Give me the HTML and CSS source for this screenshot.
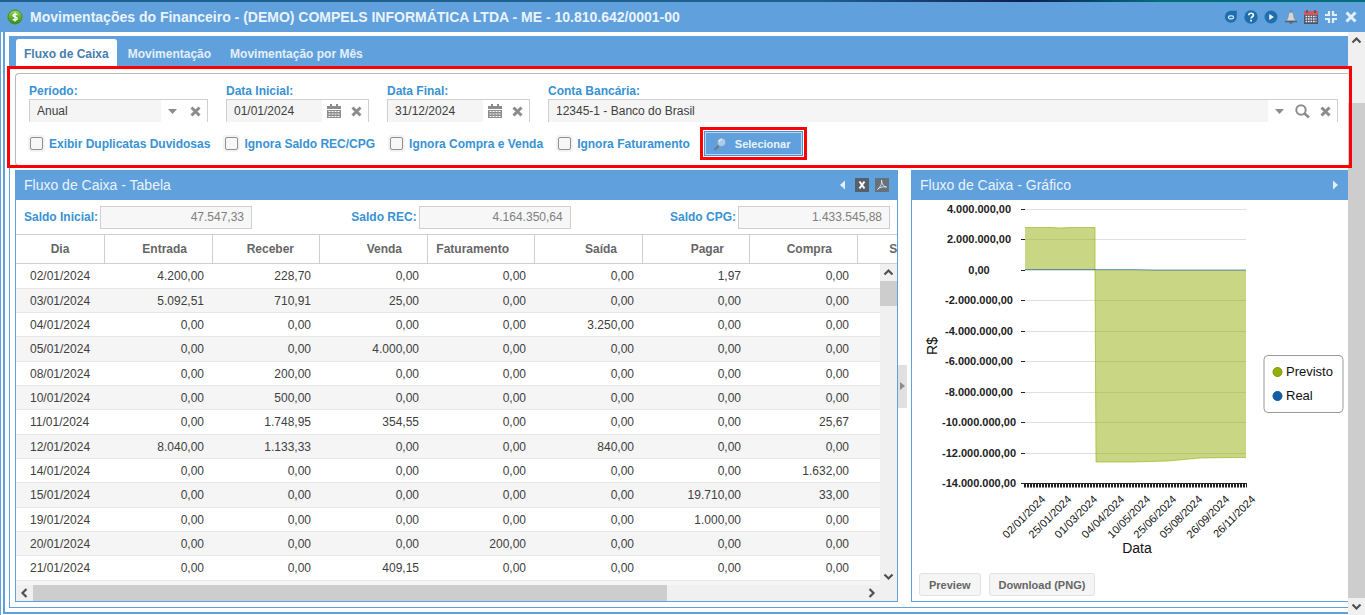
FILE: index.html
```
<!DOCTYPE html>
<html lang="pt-BR">
<head>
    <meta charset="UTF-8">
    <meta name="viewport" content="width=device-width, initial-scale=1.0">
    <title>Movimentações do Financeiro</title>
    <link rel="stylesheet" href="styles.css">
</head>
<body>
    <div class="window">
        <header class="titlebar">
            <svg class="title-icon" width="16" height="16" viewBox="0 0 16 16" aria-hidden="true">
                <defs>
                    <linearGradient id="coin" x1="0" y1="0" x2="0" y2="1">
                        <stop offset="0" stop-color="#9bd65a"/>
                        <stop offset="1" stop-color="#2f8a12"/>
                    </linearGradient>
                </defs>
                <circle cx="8" cy="8" r="7" fill="url(#coin)" stroke="#3f8f22"/>
                <path d="M10.3 5.7C9.6 4.9 6 4.7 6 6.5c0 1.7 4.3 1 4.3 3 0 1.9-3.600 1.700-4.600.7M8 3.500v9" fill="none" stroke="#fff" stroke-width="1.400"/>
            </svg>
            <h1>Movimentações do Financeiro - (DEMO) COMPELS INFORMÁTICA LTDA - ME - 10.810.642/0001-00</h1>
            <div class="title-tools">
                <button type="button" aria-label="Reiniciar">
                    <svg width="14" height="14" viewBox="0 0 14 14"><path d="M7 .8h5.800v5.800A6 6 0 1 1 7 .8z" fill="#1f6fae"/><rect x="4.500" y="5.800" width="5" height="3" rx="1.500" fill="none" stroke="#e4effa" stroke-width="1.200"/></svg>
                </button>
                <button type="button" aria-label="Ajuda">
                    <svg width="14" height="14" viewBox="0 0 14 14"><circle cx="7" cy="7" r="6.700" fill="#1f6fae"/><path d="M4.800 5.300C4.800 2.500 9.400 2.600 9.400 5.200 9.400 6.700 7.100 6.900 7.100 8.600M7.100 9.800v1.700" fill="none" stroke="#fff" stroke-width="1.700"/></svg>
                </button>
                <button type="button" aria-label="Executar">
                    <svg width="14" height="14" viewBox="0 0 14 14"><circle cx="7" cy="7" r="6.500" fill="#1f6fae"/><path d="M5.300 4l4.500 3-4.500 3z" fill="#fff"/></svg>
                </button>
                <button type="button" aria-label="Avisos">
                    <svg width="14" height="14" viewBox="0 0 14 14"><path d="M6.200.5h1.600v2H6.200z" fill="#69747e"/><path d="M7 2C3.800 2 4.600 7 3.400 9L1.500 11h11L10.600 9C9.400 7 10.200 2 7 2z" fill="#cfd6dc" stroke="#7f8a94" stroke-width=".8"/><path d="M1 10.800h12v1.400H1zM5.500 12.200h3v1.300h-3z" fill="#56616b"/></svg>
                </button>
                <button type="button" aria-label="Calendário">
                    <svg width="14" height="14" viewBox="0 0 14 14"><path d="M0 1h14v13H0z" fill="#4f5368"/><path d="M0 1h14v4H0z" fill="#d8565a"/><path d="M2 0h2v3H2zM10 0h2v3h-2z" fill="#5f5a68"/><path d="M1.500 6.500h11M1.500 9h11M1.500 11.500h11" stroke="#e8ecf2" stroke-width="1.500" stroke-dasharray="1.700 .8"/></svg>
                </button>
                <button type="button" aria-label="Restaurar">
                    <svg width="14" height="14" viewBox="0 0 14 14"><path d="M5 1v4H1M9 1v4h4M5 13V9H1M9 13V9h4" fill="none" stroke="#e4effa" stroke-width="2.200"/></svg>
                </button>
                <button type="button" aria-label="Fechar">
                    <svg width="14" height="14" viewBox="0 0 14 14"><path d="M2.500 2.500l9 9M11.500 2.500l-9 9" stroke="#e4effa" stroke-width="3"/></svg>
                </button>
            </div>
        </header>

        <div class="window-body">
            <main class="frame">
                <div class="tab-panel">
                    <nav class="tabs">
                        <button type="button" class="tab active">Fluxo de Caixa</button>
                        <button type="button" class="tab">Movimentação</button>
                        <button type="button" class="tab">Movimentação por Mês</button>
                    </nav>

                    <form class="filters">
                        <div class="filter-row">
                            <div class="field field-period">
                                <label for="periodo">Período:</label>
                                <div class="control">
                                    <select id="periodo"><option>Anual</option></select>
                                    <span class="trigger"><svg width="9" height="5" viewBox="0 0 9 5"><path d="M0 0h9L4.500 5z" fill="#8c8c8c"/></svg></span>
                                    <button type="button" class="trigger" aria-label="Limpar período"><svg width="11" height="11" viewBox="0 0 11 11"><path d="M1.500 1.500l8 8M9.500 1.500l-8 8" stroke="#8c8c8c" stroke-width="3"/></svg></button>
                                </div>
                            </div>
                            <div class="field field-date">
                                <label for="data-inicial">Data Inicial:</label>
                                <div class="control">
                                    <input type="text" id="data-inicial" value="01/01/2024">
                                    <button type="button" class="trigger" aria-label="Abrir calendário"><svg width="14" height="14" viewBox="0 0 14 14"><path d="M3 0h2v2h4V0h2v2h3v3H0V2h3zM0 6h14v8H0z" fill="#8c8c8c"/><path d="M1.500 7.500h11M1.500 10h11M1.500 12.500h11" stroke="#fff" stroke-width="1" stroke-dasharray="2 1"/></svg></button>
                                    <button type="button" class="trigger" aria-label="Limpar data inicial"><svg width="11" height="11" viewBox="0 0 11 11"><path d="M1.500 1.500l8 8M9.500 1.500l-8 8" stroke="#8c8c8c" stroke-width="3"/></svg></button>
                                </div>
                            </div>
                            <div class="field field-date">
                                <label for="data-final">Data Final:</label>
                                <div class="control">
                                    <input type="text" id="data-final" value="31/12/2024">
                                    <button type="button" class="trigger" aria-label="Abrir calendário"><svg width="14" height="14" viewBox="0 0 14 14"><path d="M3 0h2v2h4V0h2v2h3v3H0V2h3zM0 6h14v8H0z" fill="#8c8c8c"/><path d="M1.500 7.500h11M1.500 10h11M1.500 12.500h11" stroke="#fff" stroke-width="1" stroke-dasharray="2 1"/></svg></button>
                                    <button type="button" class="trigger" aria-label="Limpar data final"><svg width="11" height="11" viewBox="0 0 11 11"><path d="M1.500 1.500l8 8M9.500 1.500l-8 8" stroke="#8c8c8c" stroke-width="3"/></svg></button>
                                </div>
                            </div>
                            <div class="field field-account">
                                <label for="conta">Conta Bancária:</label>
                                <div class="control">
                                    <select id="conta"><option>12345-1 - Banco do Brasil</option></select>
                                    <span class="trigger"><svg width="9" height="5" viewBox="0 0 9 5"><path d="M0 0h9L4.500 5z" fill="#8c8c8c"/></svg></span>
                                    <button type="button" class="trigger" aria-label="Pesquisar conta"><svg width="15" height="15" viewBox="0 0 15 15"><circle cx="6" cy="6" r="4.700" fill="none" stroke="#8c8c8c" stroke-width="2"/><path d="M9.500 9.500l4.500 4" stroke="#8c8c8c" stroke-width="2.600"/></svg></button>
                                    <button type="button" class="trigger" aria-label="Limpar conta"><svg width="11" height="11" viewBox="0 0 11 11"><path d="M1.500 1.500l8 8M9.500 1.500l-8 8" stroke="#8c8c8c" stroke-width="3"/></svg></button>
                                </div>
                            </div>
                        </div>
                        <div class="check-row">
                            <label class="check"><input type="checkbox">Exibir Duplicatas Duvidosas</label>
                            <label class="check"><input type="checkbox">Ignora Saldo REC/CPG</label>
                            <label class="check"><input type="checkbox">Ignora Compra e Venda</label>
                            <label class="check"><input type="checkbox">Ignora Faturamento</label>
                            <button type="button" class="btn-select">
                                <svg width="14" height="14" viewBox="0 0 14 14" aria-hidden="true"><path d="M6 8.500L1.500 13" stroke="#6f7780" stroke-width="2.200"/><circle cx="8.500" cy="5.200" r="4.300" fill="#a9cdf0" stroke="#7d9dbd"/><path d="M6 5a2.800 2.800 0 0 1 3-2.500" fill="none" stroke="#e8f3fd"/></svg>
                                Selecionar
                            </button>
                        </div>
                    </form>

                    <div class="panels">
                        <section class="panel panel-table">
                            <div class="panel-header">
                                <h2>Fluxo de Caixa - Tabela</h2>
                                <button type="button" class="tool" aria-label="Recolher"><svg width="14" height="14" viewBox="0 0 14 14"><path d="M10 2.500v9L5 7z" fill="#e4effa"/></svg></button>
                                <button type="button" class="tool" aria-label="Exportar Excel"><svg width="14" height="14" viewBox="0 0 14 14"><path d="M0 0h14v14H0z" fill="#56606b"/><path d="M4.500 3.500l5 7M9.500 3.500l-5 7" stroke="#fff" stroke-width="2"/></svg></button>
                                <button type="button" class="tool" aria-label="Exportar PDF"><svg width="14" height="14" viewBox="0 0 14 14"><path d="M0 0h14v14H0z" fill="#66717c"/><path d="M6.500 2c.5 3 0 5.500-4 9.500 2-2.500 5-3 9-2.500-3-.5-5-3-5-7z" fill="none" stroke="#dfe6ec"/></svg></button>
                            </div>
                            <div class="balances">
                                <div class="balance"><label for="saldo-inicial">Saldo Inicial:</label><input type="text" id="saldo-inicial" value="47.547,33" readonly></div>
                                <div class="balance"><label for="saldo-rec">Saldo REC:</label><input type="text" id="saldo-rec" value="4.164.350,64" readonly></div>
                                <div class="balance"><label for="saldo-cpg">Saldo CPG:</label><input type="text" id="saldo-cpg" value="1.433.545,88" readonly></div>
                            </div>
                            <div class="grid">
                                <table>
                                    <thead>
                                        <tr><th>Dia</th><th>Entrada</th><th>Receber</th><th>Venda</th><th>Faturamento</th><th>Saída</th><th>Pagar</th><th>Compra</th><th>Saldo Dia</th></tr>
                                    </thead>
                                    <tbody>
                                        <tr><td>02/01/2024</td><td>4.200,00</td><td>228,70</td><td>0,00</td><td>0,00</td><td>0,00</td><td>1,97</td><td>0,00</td><td></td></tr>
                                        <tr><td>03/01/2024</td><td>5.092,51</td><td>710,91</td><td>25,00</td><td>0,00</td><td>0,00</td><td>0,00</td><td>0,00</td><td></td></tr>
                                        <tr><td>04/01/2024</td><td>0,00</td><td>0,00</td><td>0,00</td><td>0,00</td><td>3.250,00</td><td>0,00</td><td>0,00</td><td></td></tr>
                                        <tr><td>05/01/2024</td><td>0,00</td><td>0,00</td><td>4.000,00</td><td>0,00</td><td>0,00</td><td>0,00</td><td>0,00</td><td></td></tr>
                                        <tr><td>08/01/2024</td><td>0,00</td><td>200,00</td><td>0,00</td><td>0,00</td><td>0,00</td><td>0,00</td><td>0,00</td><td></td></tr>
                                        <tr><td>10/01/2024</td><td>0,00</td><td>500,00</td><td>0,00</td><td>0,00</td><td>0,00</td><td>0,00</td><td>0,00</td><td></td></tr>
                                        <tr><td>11/01/2024</td><td>0,00</td><td>1.748,95</td><td>354,55</td><td>0,00</td><td>0,00</td><td>0,00</td><td>25,67</td><td></td></tr>
                                        <tr><td>12/01/2024</td><td>8.040,00</td><td>1.133,33</td><td>0,00</td><td>0,00</td><td>840,00</td><td>0,00</td><td>0,00</td><td></td></tr>
                                        <tr><td>14/01/2024</td><td>0,00</td><td>0,00</td><td>0,00</td><td>0,00</td><td>0,00</td><td>0,00</td><td>1.632,00</td><td></td></tr>
                                        <tr><td>15/01/2024</td><td>0,00</td><td>0,00</td><td>0,00</td><td>0,00</td><td>0,00</td><td>19.710,00</td><td>33,00</td><td></td></tr>
                                        <tr><td>19/01/2024</td><td>0,00</td><td>0,00</td><td>0,00</td><td>0,00</td><td>0,00</td><td>1.000,00</td><td>0,00</td><td></td></tr>
                                        <tr><td>20/01/2024</td><td>0,00</td><td>0,00</td><td>0,00</td><td>200,00</td><td>0,00</td><td>0,00</td><td>0,00</td><td></td></tr>
                                        <tr><td>21/01/2024</td><td>0,00</td><td>0,00</td><td>409,15</td><td>0,00</td><td>0,00</td><td>0,00</td><td>0,00</td><td></td></tr>
                                        <tr><td></td><td></td><td></td><td></td><td></td><td></td><td></td><td></td><td></td></tr>
                                    </tbody>
                                </table>
                                <div class="scroll-v grid-scroll">
                                    <svg class="arrow" width="17" height="17" viewBox="0 0 17 17"><path d="M4.500 10.500l4-4 4 4" fill="none" stroke="#505050" stroke-width="2.200"/></svg>
                                    <div class="thumb"></div>
                                    <svg class="arrow arrow-end" width="17" height="17" viewBox="0 0 17 17"><path d="M4.500 6.500l4 4 4-4" fill="none" stroke="#505050" stroke-width="2.200"/></svg>
                                </div>
                            </div>
                            <div class="scroll-h">
                                <svg class="arrow" width="17" height="16" viewBox="0 0 17 16"><path d="M10.500 4l-4 4 4 4" fill="none" stroke="#505050" stroke-width="2.200"/></svg>
                                <div class="thumb"></div>
                                <svg class="arrow arrow-end" width="17" height="16" viewBox="0 0 17 16"><path d="M6.500 4l4 4-4 4" fill="none" stroke="#505050" stroke-width="2.200"/></svg>
                            </div>
                        </section>

                        <div class="splitter">
                            <button type="button" aria-label="Recolher gráfico"><svg width="5" height="8" viewBox="0 0 5 8"><path d="M0 0l5 4-5 4z" fill="#8c8c8c"/></svg></button>
                        </div>

                        <section class="panel panel-chart">
                            <div class="panel-header">
                                <h2>Fluxo de Caixa - Gráfico</h2>
                                <button type="button" class="tool" aria-label="Recolher"><svg width="14" height="14" viewBox="0 0 14 14"><path d="M5 2.500v9L10 7z" fill="#e4effa"/></svg></button>
                            </div>
                            <svg class="chart" width="436" height="366" viewBox="0 0 436 366" role="img" aria-label="Gráfico do fluxo de caixa">
                                <path class="gridline" d="M113 9.500h221M113 39.500h221M113 70.500h221M113 100.500h221M113 131.500h221M113 161.500h221M113 192.500h221M113 222.500h221M113 253.500h221"/>
                                <path class="tick" d="M109 9.500h4M109 39.500h4M109 70.500h4M109 100.500h4M109 131.500h4M109 161.500h4M109 192.500h4M109 222.500h4M109 253.500h4M109 283.500h226"/>
                                <path class="minor-ticks" d="M112 285.500h223"/>
                                <path class="area" d="M113 27.500h26l8 .5 12-.5h24V70l1 192h36l36-1 32-3 30-.5h16V70H113z"/>
                                <path class="area-line" d="M113 27.500h26l8 .5 12-.5h24V70l1 192h36l36-1 32-3 30-.5h16"/>
                                <path class="real-line" d="M113 69.500h108l20 .5h93"/>
                                <g class="y-labels">
                                    <text x="67" y="13">4.000.000,00</text>
                                    <text x="67" y="43">2.000.000,00</text>
                                    <text x="67" y="74">0,00</text>
                                    <text x="67" y="104">-2.000.000,00</text>
                                    <text x="67" y="135">-4.000.000,00</text>
                                    <text x="67" y="165">-6.000.000,00</text>
                                    <text x="67" y="196">-8.000.000,00</text>
                                    <text x="67" y="226">-10.000.000,00</text>
                                    <text x="67" y="257">-12.000.000,00</text>
                                    <text x="67" y="287">-14.000.000,00</text>
                                </g>
                                <g class="x-labels">
                                    <text transform="translate(134 300) rotate(-45)">02/01/2024</text>
                                    <text transform="translate(160 300) rotate(-45)">25/01/2024</text>
                                    <text transform="translate(186 300) rotate(-45)">01/03/2024</text>
                                    <text transform="translate(213 300) rotate(-45)">04/04/2024</text>
                                    <text transform="translate(239 300) rotate(-45)">10/05/2024</text>
                                    <text transform="translate(265 300) rotate(-45)">25/06/2024</text>
                                    <text transform="translate(291 300) rotate(-45)">05/08/2024</text>
                                    <text transform="translate(318 300) rotate(-45)">26/09/2024</text>
                                    <text transform="translate(344 300) rotate(-45)">26/11/2024</text>
                                </g>
                                <text class="axis-title" transform="translate(25 146) rotate(-90)">R$</text>
                                <text class="axis-title" x="225" y="353">Data</text>
                                <rect class="legend" x="352" y="155.500" width="79" height="57" rx="4"/>
                                <circle cx="365.500" cy="172" r="4.500" fill="#94ae0a" stroke="#7d9408"/>
                                <circle cx="365.500" cy="196" r="4.500" fill="#115fa6" stroke="#0f5391"/>
                                <text class="legend-text" x="374" y="176">Previsto</text>
                                <text class="legend-text" x="374" y="200">Real</text>
                            </svg>
                            <div class="chart-actions">
                                <button type="button">Preview</button>
                                <button type="button">Download (PNG)</button>
                            </div>
                        </section>
                    </div>
                </div>
            </main>
            <div class="scroll-v page-scroll">
                <svg class="arrow" width="17" height="17" viewBox="0 0 17 17"><path d="M4.500 10.500l4-4 4 4" fill="none" stroke="#505050" stroke-width="2.200"/></svg>
                <div class="thumb"></div>
                <svg class="arrow arrow-end" width="17" height="17" viewBox="0 0 17 17"><path d="M4.500 6.500l4 4 4-4" fill="none" stroke="#505050" stroke-width="2.200"/></svg>
            </div>
        </div>
    </div>
</body>
</html>
```
FILE: styles.css
```
* {
    box-sizing: border-box;
}
body {
    margin: 0;
    font-family: "Liberation Sans", Arial, sans-serif;
    font-size: 12px;
    color: #404040;
    background-color: #fff;
    overflow: hidden;
}
button, input, select {
    font-family: inherit;
    font-size: 12px;
    margin: 0;
}
button {
    border: none;
    background: none;
    padding: 0;
    cursor: pointer;
}
svg {
    display: block;
}
h1, h2 {
    margin: 0;
}

/* janela */
.window {
    display: flex;
    flex-direction: column;
    height: 100vh;
    border-top: 2px solid #1d5c85;
    border-image: linear-gradient(to right, #1f608f 60%, #101c55 75%, #00707c 85%) 1;
    border-width: 2px 0 0;
}
.titlebar {
    display: flex;
    align-items: center;
    height: 30px;
    flex: none;
    padding: 0 7px;
    background-color: #60a0dd;
}
.titlebar h1 {
    flex: 1;
    margin-left: 7px;
    font-size: 14px;
    color: #eaf3fb;
    white-space: nowrap;
}
.title-tools {
    display: flex;
    gap: 6px;
}
.window-body {
    display: flex;
    flex: 1;
    min-height: 0;
    border-left: 1px solid #60a0dd;
}
.frame {
    display: flex;
    flex: 1;
    min-width: 0;
    margin: 0 0 1px 2px;
    padding: 4px 0 4px 4px;
    border-left: 2px solid #60a0dd;
    border-bottom: 2px solid #60a0dd;
}
.tab-panel {
    display: flex;
    flex-direction: column;
    flex: 1;
    min-width: 0;
    border-left: 1px solid #60a0dd;
    border-bottom: 1px solid #60a0dd;
}

/* abas */
.tabs {
    display: flex;
    align-items: flex-end;
    gap: 3px;
    height: 30px;
    flex: none;
    padding-left: 6px;
    background-color: #60a0dd;
}
.tab {
    height: 27px;
    padding: 2px 8px 0;
    border-radius: 3px 3px 0 0;
    font-weight: bold;
    color: #e4effa;
}
.tab.active {
    background-color: #fff;
    color: #4480b0;
}

/* filtros */
.filters {
    position: relative;
    margin: 7px 0 4px 5px;
    padding: 10px 10px 6px 13px;
    border: 1px solid #b9b9b9;
    border-right: none;
    border-radius: 4px 0 0 4px;
}
.filters::after {
    content: "";
    position: absolute;
    inset: -8px -4px -3px -9px;
    border: 3px solid #ff0000;
    pointer-events: none;
    z-index: 2;
}
.filter-row {
    display: flex;
    gap: 18px;
}
.field label, .check, .balance label {
    color: #3892d4;
    font-weight: bold;
}
.field label {
    display: block;
    line-height: 15px;
}
.field-period {
    width: 179px;
}
.field-date {
    width: 143px;
}
.field-account {
    flex: 1;
}
.control {
    display: flex;
    height: 23px;
    border: 1px solid #cfcfcf;
    border-bottom: none;
}
.control input, .control select {
    flex: 1;
    min-width: 0;
    padding: 0 7px;
    border: none;
    border-radius: 0;
    background-color: #f5f5f5;
    color: #404040;
    appearance: none;
}
.trigger {
    display: flex;
    align-items: center;
    justify-content: center;
    width: 23px;
}
.check-row {
    display: flex;
    align-items: center;
    gap: 14px;
    margin-top: 6px;
}
.check {
    display: flex;
    align-items: center;
    gap: 6px;
    white-space: nowrap;
}
.check input {
    width: 13px;
    height: 13px;
    margin-left: 1px;
    appearance: none;
    border: 1px solid #8f8f8f;
    border-radius: 2px;
    background-color: #f7f7f7;
    box-shadow: 0 0 0 2px #f3f3f3;
}
.btn-select {
    display: flex;
    align-items: center;
    gap: 8px;
    height: 25px;
    margin: 3px 0;
    padding: 0 12px 0 8px;
    border: 1px solid #4b8fce;
    outline: 3px solid #ff0000;
    outline-offset: 1px;
    box-shadow: inset 0 0 0 1px #b9d7f1;
    background-color: #60a0dd;
    color: #eaf3fb;
    font-size: 11px;
    font-weight: bold;
}

/* painéis */
.panels {
    display: flex;
    flex: 1;
    min-height: 0;
    margin: 0 0 5px 5px;
}
.panel {
    display: flex;
    flex-direction: column;
    min-width: 0;
    border: 1px solid #60a0dd;
    border-top: none;
}
.panel-table {
    flex: 1;
}
.panel-chart {
    flex: none;
    width: 437px;
    border-right: none;
}
.panel-header {
    display: flex;
    align-items: center;
    gap: 6px;
    height: 30px;
    flex: none;
    padding: 0 8px;
    background-color: #60a0dd;
}
.panel-chart .panel-header {
    padding-right: 6px;
}
.panel-header h2 {
    flex: 1;
    font-size: 14px;
    font-weight: normal;
    color: #eaf3fb;
}
.balances {
    display: flex;
    align-items: center;
    justify-content: space-between;
    height: 34px;
    flex: none;
    padding: 0 7px 0 8px;
}
.balance {
    display: flex;
    align-items: center;
    gap: 2px;
}
.balance input {
    width: 152px;
    height: 23px;
    padding: 0 7px;
    border: 1px solid #cfcfcf;
    background-color: #f7f7f7;
    color: #808080;
    text-align: right;
}

/* tabela */
.grid {
    position: relative;
    flex: 1;
    min-height: 0;
    overflow: hidden;
}
table {
    width: 954px;
    table-layout: fixed;
    border-collapse: separate;
    border-spacing: 0;
}
th {
    width: 108px;
    height: 30px;
    padding: 0 25px 0 0;
    border: 1px solid #cfcfcf;
    border-left: none;
    color: #666;
    text-align: right;
    white-space: nowrap;
}
th:nth-child(odd) {
    width: 107px;
}
th:first-child {
    width: 89px;
    padding: 0;
    text-align: center;
}
th:last-child {
    width: 112px;
}
td {
    height: 24px;
    padding: 0 9px 0 0;
    border-bottom: 1px solid #e6e6e6;
    text-align: right;
}
td:first-child {
    padding: 0 0 0 14px;
    text-align: left;
}
tr:nth-child(3n+1) td {
    height: 25px;
}
tr:nth-child(even) td {
    background-color: #f5f5f5;
}

/* barras de rolagem */
.scroll-v, .scroll-h {
    display: flex;
    flex: none;
    background-color: #f0f0f0;
}
.scroll-v {
    flex-direction: column;
    width: 17px;
}
.scroll-h {
    height: 16px;
}
.arrow {
    flex: none;
}
.arrow-end {
    margin-top: auto;
}
.scroll-h .arrow-end {
    margin: 0 17px 0 auto;
}
.thumb {
    background-color: #cdcdcd;
}
.grid-scroll {
    position: absolute;
    top: 30px;
    right: 0;
    bottom: 0;
}
.grid-scroll .thumb {
    height: 25px;
}
.scroll-h .thumb {
    width: 72%;
}
.page-scroll .thumb {
    flex: 1;
    margin-top: 54px;
}
.splitter {
    display: flex;
    align-items: center;
    flex: none;
    width: 13px;
}
.splitter button {
    display: flex;
    align-items: center;
    justify-content: center;
    width: 9px;
    height: 43px;
    background-color: #e0e0e0;
}

/* gráfico */
.chart {
    flex: none;
}
.gridline {
    stroke: #dedede;
}
.tick {
    stroke: #222;
}
.minor-ticks {
    stroke: #222;
    stroke-width: 4;
    stroke-dasharray: 2 1;
}
.area {
    fill: #94ae0a;
    fill-opacity: 0.5;
}
.area-line {
    fill: none;
    stroke: #94ae0a;
    stroke-opacity: 0.6;
}
.real-line {
    fill: none;
    stroke: #115fa6;
    stroke-opacity: 0.6;
}
.y-labels text {
    font-size: 11px;
    font-weight: bold;
    fill: #222;
    text-anchor: middle;
}
.x-labels text {
    font-size: 11px;
    fill: #111;
    text-anchor: end;
}
.axis-title {
    font-size: 14px;
    fill: #111;
    text-anchor: middle;
}
.legend {
    fill: #fff;
    stroke: #999;
}
.legend-text {
    font-size: 13px;
    fill: #111;
}
.chart-actions {
    display: flex;
    gap: 8px;
    margin-top: auto;
    padding: 0 7px 5px;
}
.chart-actions button {
    height: 23px;
    padding: 0 9px;
    border: 1px solid #e1e1e1;
    border-radius: 3px;
    background-color: #f5f5f5;
    color: #666;
    font-size: 11px;
    font-weight: bold;
}
```
